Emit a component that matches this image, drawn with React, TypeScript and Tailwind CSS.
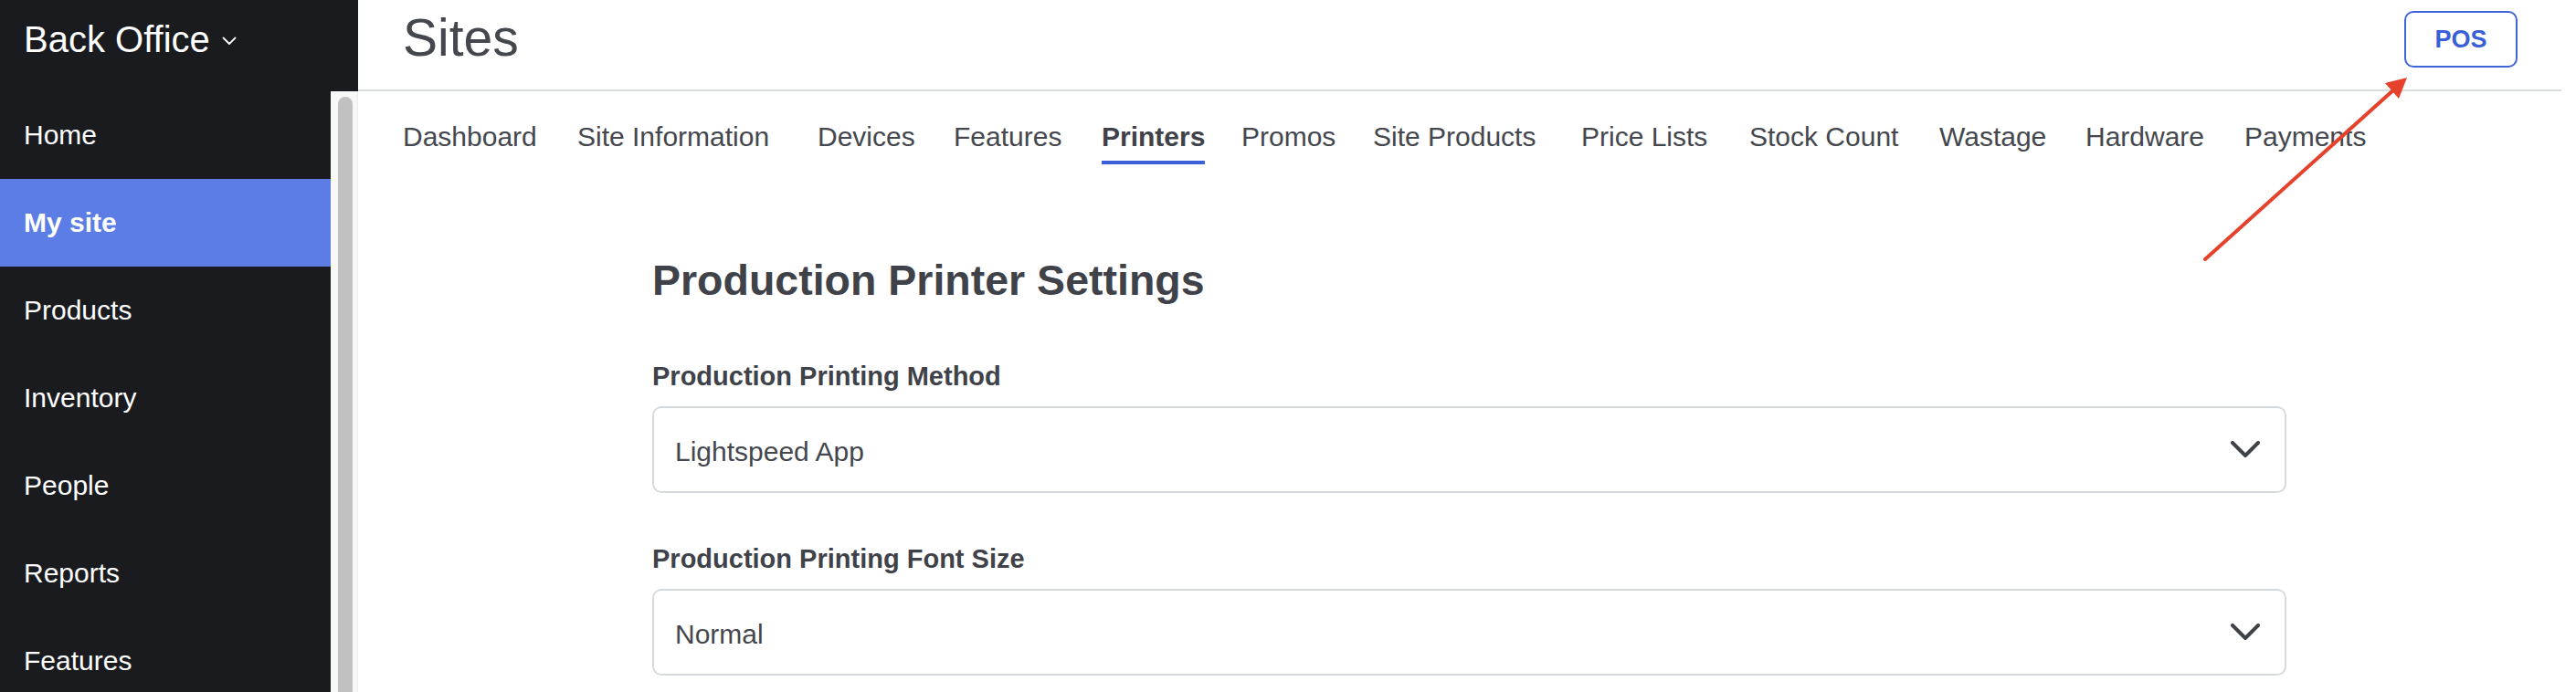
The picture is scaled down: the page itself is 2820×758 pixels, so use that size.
import React from "react";

const tabs: { label: string; w: string; active?: boolean }[] = [
  { label: "Dashboard", w: "w-[191px]" },
  { label: "Site Information", w: "w-[263px]" },
  { label: "Devices", w: "w-[149px]" },
  { label: "Features", w: "w-[162px]" },
  { label: "Printers", w: "w-[153px]", active: true },
  { label: "Promos", w: "w-[144px]" },
  { label: "Site Products", w: "w-[228px]" },
  { label: "Price Lists", w: "w-[184px]" },
  { label: "Stock Count", w: "w-[208px]" },
  { label: "Wastage", w: "w-[160px]" },
  { label: "Hardware", w: "w-[174px]" },
  { label: "Payments", w: "w-auto" },
];

const navItems = ["Home", "My site", "Products", "Inventory", "People", "Reports", "Features"];

function Chevron() {
  return (
    <svg width="32" height="18" viewBox="0 0 32 18" fill="none">
      <path d="M2 2 L16 16 L30 2" stroke="#404249" strokeWidth="4" strokeLinecap="round" strokeLinejoin="round" />
    </svg>
  );
}

function Select({ value }: { value: string }) {
  return (
    <div className="mt-[18px] h-[95px] border-2 border-[#d6dadf] rounded-[10px] flex items-center justify-between pl-[23px] pr-[27px] pt-[6px]">
      <span className="text-[30px] leading-none text-[#45474e]">{value}</span>
      <span className="-mt-[6px]">
        <Chevron />
      </span>
    </div>
  );
}

export default function App() {
  return (
    <div
      className="relative flex w-[2820px] h-[758px] overflow-hidden bg-white"
      style={{ fontFamily: '"Liberation Sans", Arial, sans-serif' }}
    >
      {/* Sidebar */}
      <div className="flex flex-col w-[392px] shrink-0 h-full">
        <div className="h-[100px] bg-[#1a1b1f] flex items-start pl-[26px] pt-[23px]">
          <span className="text-[40px] leading-none text-white">Back Office</span>
          <svg className="ml-[13px] mt-[17px]" width="16" height="10" viewBox="0 0 16 10" fill="none">
            <path d="M1.5 1.5 L8 8 L14.5 1.5" stroke="white" strokeWidth="1.8" strokeLinecap="round" strokeLinejoin="round" />
          </svg>
        </div>
        <div className="flex flex-1 min-h-0">
          <div className="w-[362px] bg-[#1a1b1f] flex flex-col">
            {navItems.map((item) => (
              <div
                key={item}
                className={
                  item === "My site"
                    ? "h-[96px] shrink-0 flex items-center pl-[26px] bg-[#5b7de5] text-white font-bold text-[30px] leading-none"
                    : "h-[96px] shrink-0 flex items-center pl-[26px] text-white text-[30px] leading-none"
                }
              >
                {item}
              </div>
            ))}
          </div>
          <div className="w-[30px] bg-[#f8f8f8] border-r border-[#ececec] pt-[6px] pl-[8px]">
            <div className="w-[16px] h-[700px] bg-[#c1c1c1] rounded-full" />
          </div>
        </div>
      </div>

      {/* Main */}
      <div className="flex-1 flex flex-col min-w-0">
        <div className="h-[100px] mr-[16px] border-b-2 border-[#d9dde0] flex justify-between pl-[49px] pr-[48px]">
          <div className="pt-[13px]">
            <span className="block text-[57px] leading-none text-[#45474e]">Sites</span>
          </div>
          <div className="mt-[12px] h-[62px] w-[124px] border-2 border-[#3f64d8] rounded-[10px] flex items-center justify-center">
            <span className="text-[27px] leading-none font-bold text-[#3a5fd6]">POS</span>
          </div>
        </div>

        <div className="flex pl-[49px] pt-[35px]">
          {tabs.map((t) => (
            <div key={t.label} className={`${t.w} shrink-0`}>
              {t.active ? (
                <span className="inline-block text-[30px] leading-none font-bold text-[#404249] pb-[11px] border-b-4 border-[#3b5fd9]">
                  {t.label}
                </span>
              ) : (
                <span className="inline-block text-[30px] leading-none text-[#45474e] pb-[15px]">{t.label}</span>
              )}
            </div>
          ))}
        </div>

        <div className="ml-[322px] w-[1789px] mt-[104px] flex flex-col">
          <h1 className="text-[46.5px] leading-none font-bold text-[#404249]">Production Printer Settings</h1>
          <div className="mt-[67px] text-[29px] leading-none font-bold text-[#404249]">Production Printing Method</div>
          <Select value="Lightspeed App" />
          <div className="mt-[58px] text-[29px] leading-none font-bold text-[#404249]">Production Printing Font Size</div>
          <Select value="Normal" />
        </div>
      </div>

      {/* Annotation arrow */}
      <svg className="absolute left-0 top-0 pointer-events-none" width="2820" height="758" viewBox="0 0 2820 758">
        <line x1="2414" y1="284" x2="2622" y2="97" stroke="#e5412b" strokeWidth="4" strokeLinecap="round" />
        <polygon points="2635,85 2626,108 2611,91" fill="#e5412b" />
      </svg>
    </div>
  );
}
